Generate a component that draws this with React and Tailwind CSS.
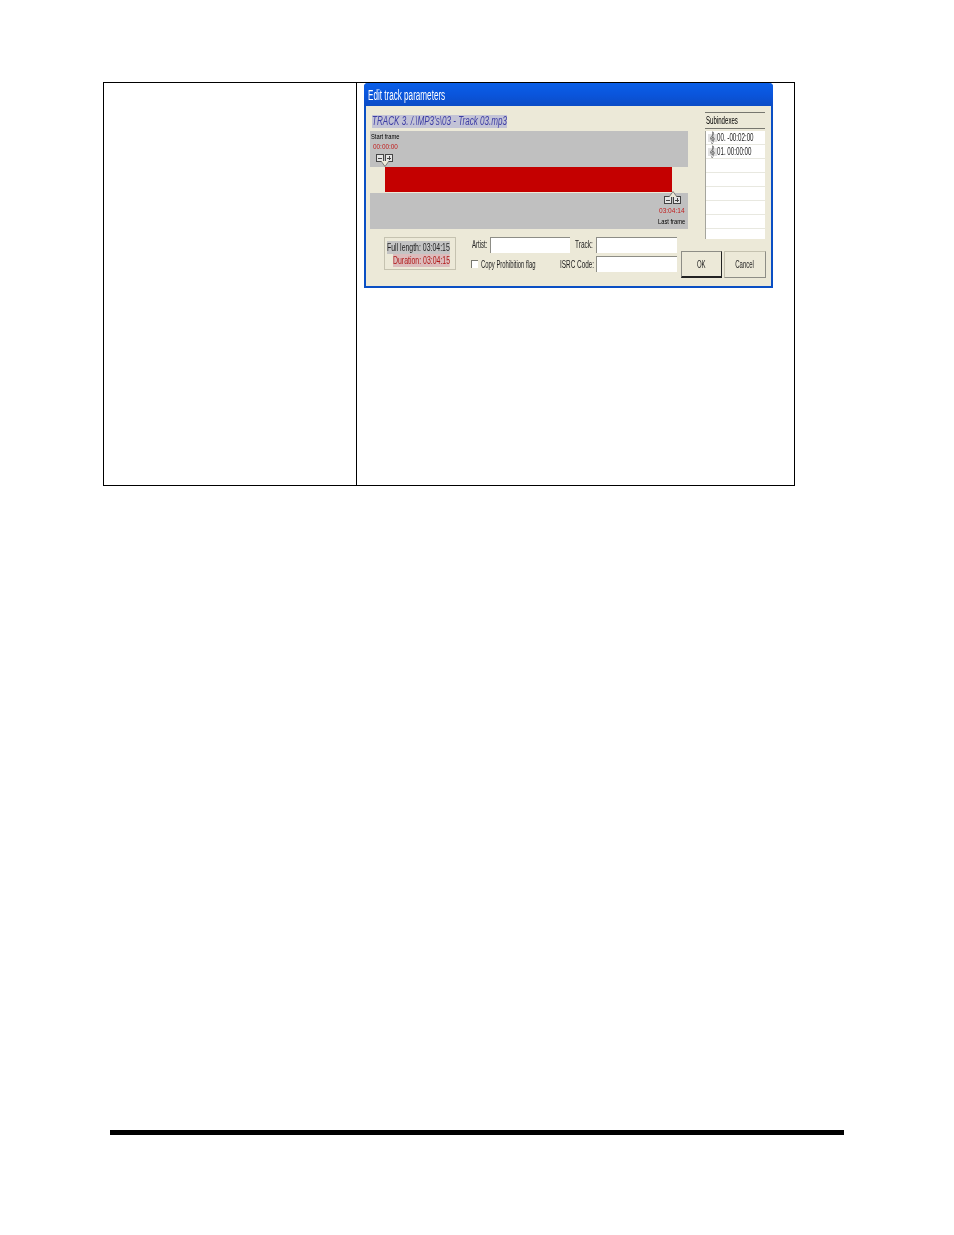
import React from "react";

const FONT = "font-['Liberation_Sans',Arial,sans-serif]";

const SUBINDEX_ROWS = ["00. -00:02:00", "01. 00:00:00", "", "", "", "", "", ""];

function Squeezed({ children, className = "" }) {
  return <span className={`block whitespace-nowrap ${className}`}>{children}</span>;
}

function NoteIcon() {
  return (
    <svg width="9" height="13" viewBox="0 0 9 13" className="shrink-0" fill="none" stroke="#5a5a5a" strokeWidth="0.8">
      <path d="M0 4h9M0 6h9M0 8h9M0 10h9" stroke="#b5b5b5" />
      <path d="M5 12.5c-1.500.5-2-1-1-1.200M4.600 0.500l.6 11M5 1c1.600 1.500-.3 3-2 5-1.500 2 .5 4 2.500 3.200 1.500-.8.700-3-1-2.700-1.200.3-1.200 1.500-.3 1.800" />
    </svg>
  );
}

function StepButtons() {
  return (
    <div className="flex gap-[1px]">
      <div className="w-[8px] h-[8px] border border-[#444] bg-[#e4e4e4] flex items-center justify-center">
        <div className="w-[4px] h-[1px] bg-[#444]" />
      </div>
      <div className="w-[8px] h-[8px] border border-[#444] bg-[#e4e4e4] flex items-center justify-center relative">
        <div className="w-[4px] h-[1px] bg-[#444]" />
        <div className="absolute w-[1px] h-[4px] bg-[#444]" />
      </div>
    </div>
  );
}

function Pointer({ up, className = "" }) {
  return (
    <svg width="10" height="6" viewBox="0 0 10 6" className={`absolute ${className}`}>
      <path d={up ? "M1 6 5 .5 9 6" : "M1 0 5 5.500 9 0"} fill="#ece9d8" stroke="#666" strokeWidth="0.8" />
    </svg>
  );
}

function SunkenInput({ className = "" }) {
  return <div className={`h-[16px] bg-white border-l border-t border-[#8d8d86] ${className}`} />;
}

function EditTrackWindow() {
  return (
    <div className={`w-[409px] h-[205px] bg-[#ece9d8] border-2 border-t-0 border-[#0a4fc4] rounded-t-[4px] flex flex-col blur-[0.35px] ${FONT}`}>
      <div className="h-[23px] -mx-[2px] rounded-t-[4px] bg-gradient-to-b from-[#0a5fe8] via-[#0a55dc] to-[#0b4cc6] flex items-center pl-[4px] shrink-0">
        <Squeezed className="text-white text-[14px] leading-none origin-left scale-x-[0.58]">Edit track parameters</Squeezed>
      </div>

      <div className="flex pl-[4px] h-[133px]">
        <div className="w-[318px] pt-[9px]">
          <div className="h-[13px] pl-[2px] mb-[3px] flex">
            <Squeezed className="text-[12px] leading-[13px] italic text-[#3c3ca4] bg-[#c3c3d6] w-[200px] origin-left scale-x-[0.675]">TRACK 3. /.\MP3's\03 - Track 03.mp3</Squeezed>
          </div>
          <div className="h-[36px] bg-[#c0c0c0] pl-[1px] pt-[1px] flex flex-col">
            <Squeezed className="text-[8px] leading-[9px] text-black origin-left scale-x-[0.72]">Start frame</Squeezed>
            <Squeezed className="text-[8px] leading-[11px] text-[#c02020] ml-[2px] origin-left scale-x-[0.8]">00:00:00</Squeezed>
            <div className="ml-[5px] mt-[2px] relative">
              <StepButtons />
              <Pointer className="left-[4px] top-[7px]" />
            </div>
          </div>
          <div className="h-[25px] ml-[15px] mr-[16px] bg-[#c40000]" />
          <div className="h-[36px] mt-[1px] bg-[#c0c0c0] pr-[2px] pt-[3px] flex flex-col items-end">
            <div className="mr-[5px] relative">
              <StepButtons />
              <Pointer up className="left-[4px] -top-[5px]" />
            </div>
            <div className="w-[27px] h-[11px] mt-[1px] flex">
              <Squeezed className="text-[8px] leading-[11px] text-[#c02020] origin-left scale-x-[0.82]">03:04:14</Squeezed>
            </div>
            <div className="w-[28px] h-[10px] mt-[1px] flex">
              <Squeezed className="text-[8px] leading-[10px] text-black origin-left scale-x-[0.72]">Last frame</Squeezed>
            </div>
          </div>
        </div>

        <div className="w-[60px] ml-[17px] mt-[6px] h-[127px] flex flex-col border-t border-[#77776f]">
          <div className="h-[16px] pl-[1px] border-b border-[#77776f] flex items-center">
            <Squeezed className="text-[10px] leading-none text-black origin-left scale-x-[0.61]">Subindexes</Squeezed>
          </div>
          <div className="flex-1 bg-white mt-[2px] overflow-hidden border-l border-[#a5a59d]">
            {SUBINDEX_ROWS.map((row, i) => (
              <div key={i} className="h-[14px] border-b border-[#e8e8e0] flex items-center pl-[2px]">
                {row && <NoteIcon />}
                {row && <Squeezed className="text-[10px] leading-none text-[#222] origin-left scale-x-[0.62]">{row}</Squeezed>}
              </div>
            ))}
          </div>
        </div>
      </div>

      <div className="flex pl-[18px] -mt-[2px]">
        <div className="w-[72px] h-[33px] border border-[#c5c2b0] pt-[3px] flex flex-col items-start">
          <Squeezed className="text-[11px] leading-[13px] text-[#222] bg-[#c4c4c4] ml-[2px] w-[100px] origin-left scale-x-[0.63]">Full length: 03:04:15</Squeezed>
          <Squeezed className="text-[11px] leading-[13px] text-[#b01818] bg-[#dcbcbc] ml-[8px] w-[90px] origin-left scale-x-[0.63]">Duration: 03:04:15</Squeezed>
        </div>

        <div className="w-[206px] ml-[15px] flex flex-col gap-[3px]">
          <div className="flex h-[16px] items-center">
            <div className="w-[19px] flex pl-[1px] -mt-[2px]"><Squeezed className="text-[10px] text-[#222] origin-left scale-x-[0.6]">Artist:</Squeezed></div>
            <SunkenInput className="w-[80px]" />
            <div className="w-[26px] pl-[5px] flex -mt-[2px]"><Squeezed className="text-[10px] text-[#222] origin-left scale-x-[0.65]">Track:</Squeezed></div>
            <SunkenInput className="w-[81px]" />
          </div>
          <div className="flex h-[16px] items-center">
            <div className="w-[7px] h-[8px] bg-white border-l border-t border-[#77776f]" />
            <div className="w-[82px] pl-[3px] flex"><Squeezed className="text-[10px] text-[#222] origin-left scale-x-[0.59]">Copy Prohibition flag</Squeezed></div>
            <div className="w-[36px] flex"><Squeezed className="text-[10px] text-[#222] origin-left scale-x-[0.64]">ISRC Code:</Squeezed></div>
            <SunkenInput className="w-[81px]" />
          </div>
        </div>

        <div className="flex gap-[2px] ml-[4px] mt-[14px]">
          <div className="w-[41px] h-[27px] border border-[#8d8d86] border-r-[#222] border-b-[#222] border-b-2 flex items-center justify-center">
            <Squeezed className="text-[10px] text-[#222] scale-x-[0.6]">OK</Squeezed>
          </div>
          <div className="w-[42px] h-[27px] border border-[#c5c2b0] border-b-[#8d8d86] border-r-[#8d8d86] flex items-center justify-center">
            <Squeezed className="text-[10px] text-[#222] scale-x-[0.6]">Cancel</Squeezed>
          </div>
        </div>
      </div>
    </div>
  );
}

export default function App() {
  return (
    <div className="w-[954px] h-[1235px] bg-white overflow-hidden flex flex-col">
      <div className="ml-[103px] mt-[82px] w-[692px] h-[404px] border border-black flex">
        <div className="w-[253px] h-full border-r border-black shrink-0" />
        <div className="pl-[7px]">
          <EditTrackWindow />
        </div>
      </div>
      <div className="ml-[110px] mt-[644px] w-[734px] h-[5px] bg-black" />
    </div>
  );
}
